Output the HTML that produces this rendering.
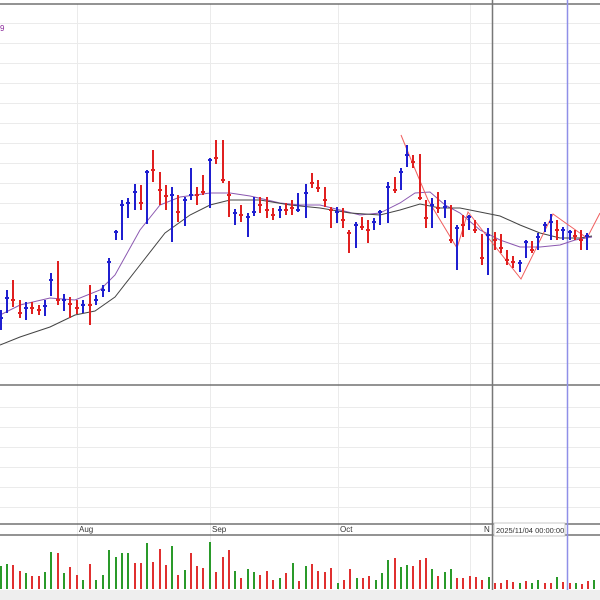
<!DOCTYPE html>
<html><head><meta charset="utf-8"><style>
html,body{margin:0;padding:0;background:#fff;width:600px;height:600px;overflow:hidden}
svg{display:block}
text{font-family:"Liberation Sans",sans-serif}
</style></head><body>
<svg width="600" height="600" viewBox="0 0 600 600" xmlns="http://www.w3.org/2000/svg">
<rect width="600" height="600" fill="#fff"/>
<g stroke="#ebebeb" stroke-width="1">
<path d="M0 23.5H600M0 43.5H600M0 63.5H600M0 83.5H600M0 103.5H600M0 123.5H600M0 143.5H600M0 163.5H600M0 183.5H600M0 203.5H600M0 223.5H600M0 243.5H600M0 263.5H600M0 283.5H600M0 303.5H600M0 323.5H600M0 343.5H600M0 363.5H600M0 407.5H600M0 427.5H600M0 447.5H600M0 467.5H600M0 487.5H600M0 507.5H600"/>
<path d="M77.5 4V590M210.5 4V590M338.5 4V590M470.5 4V590"/>
</g>
<g stroke="#555" stroke-width="1.2">
<path d="M0 4H600M0 385H600M0 524H600M0 535H600"/>
</g>
<line x1="492.5" y1="0" x2="492.5" y2="590" stroke="#777" stroke-width="1.5"/>
<line x1="567.5" y1="0" x2="567.5" y2="590" stroke="#8f8fe8" stroke-width="1.5"/>
<rect x="0" y="590" width="600" height="10" fill="#eeeeee"/>
<text x="0" y="31" font-size="8" fill="#8a2a9a">9</text>
<g font-size="8" fill="#333">
<text x="79" y="532">Aug</text><text x="212" y="532">Sep</text><text x="340" y="532">Oct</text><text x="484" y="532">N</text>
</g>
<rect x="494" y="523" width="71" height="13" fill="#fff" stroke="#bbb" stroke-width="0.8"/>
<text x="496" y="533" font-size="7.5" fill="#333">2025/11/04 00:00:00</text>
<polyline fill="none" stroke="#8b58b0" stroke-width="1" points="0,315 20,305 50,298 75,300 100,290 115,275 140,230 160,205 180,197 210,193 230,193 250,196 280,203 300,205 320,205 340,210 360,215 380,213 400,203 415,193 430,192 445,205 460,213 480,230 500,240 520,247 540,247 560,245 575,240 592,237"/>
<polyline fill="none" stroke="#444" stroke-width="1" points="0,345 20,337 50,327 75,315 95,311 115,297 140,265 165,233 190,215 210,205 230,200 260,200 290,205 320,208 350,213 380,215 400,210 420,204 440,208 460,208 480,212 500,216 520,225 540,233 560,238 580,238 592,236"/>
<polyline fill="none" stroke="#f06060" stroke-width="1" points="401,135 412,162 428,200 457,248 468,212 490,240 521,279 553,214 567,224 587,238 600,213"/>
<g stroke="#1f1fd0" stroke-width="2">
<path d="M1 310V330M-1 318H3M7 290V313M5 298H9M26 302V320M24 308H28M45 300V316M43 306H47M51 273V296M49 280H53M64 294V311M62 300H66M83 300V313M81 305H85M96 295V305M94 300H98M103 285V297M101 290H105M109 258V292M107 262H111M116 230V240M114 232H118M122 200V240M120 205H124M128 198V218M126 203H130M135 184V210M133 192H137M147 170V224M145 172H149M172 187V242M170 195H174M185 197V226M183 200H187M191 168V200M189 195H193M210 158V208M208 160H212M235 209V225M233 213H237M248 213V237M246 217H250M254 197V216M252 212H256M280 206V218M278 210H282M298 193V212M296 210H300M306 184V218M304 193H308M337 207V223M335 212H339M356 222V248M354 225H358M374 218V230M372 222H376M380 210V225M378 212H382M388 182V223M386 187H390M401 168V190M399 172H403M407 145V167M405 155H409M432 198V228M430 205H434M445 200V218M443 207H447M457 225V270M455 228H459M469 215V230M467 217H471M488 228V275M486 235H490M520 260V272M518 263H522M526 240V258M524 242H528M538 233V250M536 237H540M545 222V232M543 225H547M551 214V240M549 222H553M563 227V240M561 230H565M570 230V240M568 232H572M587 233V250M585 236H589"/>
</g>
<g stroke="#e02020" stroke-width="2">
<path d="M13 280V307M11 300H15M20 300V318M18 313H22M32 302V314M30 308H34M39 305V315M37 310H41M58 261V305M56 300H60M70 297V318M68 304H72M77 300V314M75 308H79M90 285V325M88 305H92M141 185V210M139 203H143M153 150V182M151 170H155M160 172V205M158 190H162M166 185V210M164 196H168M178 195V222M176 212H180M197 187V205M195 195H199M203 175V195M201 192H205M216 140V164M214 158H218M223 140V183M221 180H225M229 181V217M227 195H231M241 205V222M239 215H243M260 197V213M258 205H262M267 197V218M265 210H269M273 208V220M271 215H275M286 203V215M284 210H288M292 200V215M290 208H294M312 173V188M310 183H314M318 180V192M316 188H320M325 187V207M323 200H327M331 207V228M329 210H333M343 208V228M341 220H345M349 230V253M347 233H351M362 217V230M360 227H364M368 220V243M366 230H370M395 177V193M393 190H397M413 155V168M411 162H415M420 154V200M418 198H422M426 200V228M424 218H428M438 192V213M436 208H440M451 205V243M449 240H453M463 215V237M461 225H465M475 220V233M473 230H477M482 234V265M480 258H484M495 232V250M493 240H497M501 234V253M499 248H503M507 250V265M505 260H509M513 256V268M511 262H515M532 241V253M530 250H534M557 220V240M555 230H559M575 230V240M573 236H577M581 230V250M579 240H583"/>
</g>
<g stroke="#2a9a2a" stroke-width="2">
<path d="M1 589V566M7 589V564M26 589V573M45 589V572M51 589V552M64 589V573M83 589V580M96 589V580M103 589V575M109 589V550M116 589V557M122 589V553M128 589V553M147 589V543M172 589V546M185 589V570M210 589V542M235 589V571M248 589V569M254 589V572M280 589V578M293 589V563M306 589V566M338 589V583M357 589V578M376 589V580M382 589V573M388 589V560M401 589V567M407 589V565M432 589V569M445 589V572M451 589V569M489 589V577M520 589V583M532 589V583M538 589V580M557 589V577M576 589V583M594 589V580"/>
</g>
<g stroke="#e03030" stroke-width="2">
<path d="M13 589V565M20 589V571M32 589V576M39 589V576M58 589V553M70 589V567M77 589V575M90 589V564M135 589V563M141 589V563M153 589V562M160 589V549M166 589V565M178 589V575M191 589V553M197 589V566M203 589V568M216 589V572M223 589V557M229 589V550M241 589V578M260 589V575M267 589V571M273 589V580M286 589V573M299 589V581M312 589V564M318 589V571M325 589V572M331 589V568M344 589V580M350 589V569M363 589V578M369 589V576M395 589V558M413 589V566M420 589V560M426 589V558M438 589V576M457 589V578M463 589V578M470 589V576M476 589V577M482 589V580M495 589V583M501 589V583M507 589V580M513 589V582M526 589V581M545 589V583M551 589V583M563 589V582M570 589V583M582 589V584M588 589V581"/>
</g>
</svg>
</body></html>
